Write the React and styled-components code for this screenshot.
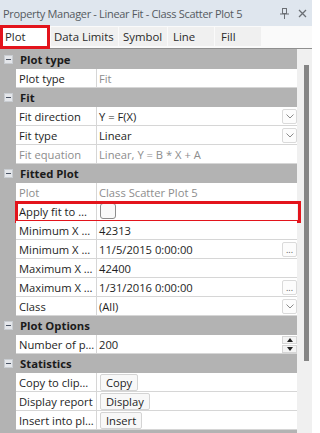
import React from "react";
import styled, { createGlobalStyle, css } from "styled-components";

const GlobalStyle = createGlobalStyle`
  html, body {
    margin: 0;
    padding: 0;
    background: #ffffff;
  }
  body {
    font-family: "Open Sans", "Noto Sans", sans-serif;
  }
`;

// 전체 패널
const Panel = styled.div`
  width: 312px;
  height: 433px;
  overflow: hidden;
  display: flex;
  flex-direction: column;
  background: #f0f0f0;
  font-size: 11.2px;
`;

const TitleBar = styled.div`
  height: 26px;
  flex: none;
  display: flex;
  align-items: center;
  padding: 0 5px 0 3px;
  background: #dfe6ee;
  color: #555a60;
  font-size: 11px;
  letter-spacing: -0.32px;
`;

const TitleText = styled.div`
  flex: 1;
  white-space: nowrap;
  overflow: hidden;
`;

const TitleIcons = styled.div`
  display: flex;
  align-items: center;
  gap: 9px;
  color: #6b6f74;
`;

const TabBar = styled.div`
  height: 23px;
  flex: none;
  display: flex;
  align-items: stretch;
  gap: 1px;
  background: #fafafa;
  padding-top: 1px;
  box-sizing: border-box;
  border-bottom: 1px solid #8f8f8f;
`;

const Tab = styled.div`
  width: ${(p) => p.w}px;
  box-sizing: border-box;
  display: flex;
  align-items: center;
  padding-left: ${(p) => p.pad || 4}px;
  margin-bottom: 2px;
  background: #f0f0f0;
  color: #2a2a2a;
  font-size: 11.4px;
  white-space: nowrap;

  ${(p) =>
    p.active &&
    css`
      background: #ffffff;
      border: 3px solid #e3141c;
      margin: -2px 0 -1px 0;
      padding-left: 2px;
      padding-bottom: 1px;
    `}
`;

const Body = styled.div`
  flex: 1;
  display: flex;
  min-height: 0;
`;

const Grid = styled.div`
  width: 297px;
  flex: none;
  background: #b3b3b3;
  padding-top: 1px;
  display: flex;
  flex-direction: column;
`;

const Scrollbar = styled.div`
  flex: 1;
  background: #f0f0f0;
  padding: 16px 0 0 7px;
`;

const Thumb = styled.div`
  width: 5px;
  height: 296px;
  background: #858585;
`;

const Header = styled.div`
  height: 19px;
  flex: none;
  display: flex;
  align-items: center;
  gap: 7px;
  padding-left: 4px;
  font-weight: 700;
  font-size: 11.3px;
  color: #1b1b1b;
`;

const Toggle = styled.span`
  width: 7px;
  height: 7px;
  flex: none;
  background: #e4e6ea;
  border: 1px solid #c9cdd2;
  display: flex;
  align-items: center;
  justify-content: center;

  &::before {
    content: "";
    width: 5px;
    height: 1px;
    background: #4b5566;
  }
`;

const Row = styled.div`
  height: 19px;
  flex: none;
  margin-left: 16px;
  display: grid;
  grid-template-columns: 80px 1fr;
  column-gap: 1px;
  background: #d6d6d6;
  padding-bottom: 1px;
  box-sizing: border-box;
  position: relative;

  ${(p) =>
    p.highlight &&
    css`
      &::after {
        content: "";
        position: absolute;
        left: -1px;
        right: -4px;
        top: -1px;
        bottom: -2px;
        border: 3px solid #e3141c;
        pointer-events: none;
      }
    `}
`;

const Label = styled.div`
  background: #ffffff;
  padding-left: 3px;
  display: flex;
  align-items: center;
  white-space: nowrap;
  overflow: hidden;
  color: ${(p) => (p.disabled ? "#8d8d8d" : "#1e1e1e")};
`;

const Value = styled.div`
  background: #ffffff;
  padding-left: 2px;
  display: flex;
  align-items: center;
  white-space: nowrap;
  overflow: hidden;
  color: ${(p) => (p.disabled ? "#8d8d8d" : "#1e1e1e")};
`;

const ValueText = styled.span`
  flex: 1;
`;

const EditButton = styled.div`
  width: 15px;
  height: 15px;
  flex: none;
  box-sizing: border-box;
  border: 1px solid #dadada;
  border-radius: 2px;
  background: #fcfcfc;
  display: flex;
  align-items: ${(p) => (p.dots ? "flex-end" : "center")};
  justify-content: center;
  padding-bottom: ${(p) => (p.dots ? 2 : 0)}px;
  color: #555;
  font-size: 9px;
  line-height: 1;
`;

const Spin = styled.div`
  width: 15px;
  height: 17px;
  flex: none;
  display: flex;
  flex-direction: column;
  gap: 1px;
`;

const SpinHalf = styled.div`
  flex: 1;
  box-sizing: border-box;
  border: 1px solid #d6d6d6;
  background: #f4f4f4;
  display: flex;
  align-items: center;
  justify-content: center;

  &::before {
    content: "";
    border-left: 3px solid transparent;
    border-right: 3px solid transparent;
    ${(p) =>
      p.up
        ? "border-bottom: 4px solid #222;"
        : "border-top: 4px solid #222;"}
  }
`;

const CheckBox = styled.div`
  width: 16px;
  height: 16px;
  box-sizing: border-box;
  border: 1px solid #8c8c8c;
  border-radius: 3px;
  background: #f9f9f9;
  margin-left: 1px;
`;

const ActionButton = styled.div`
  height: 17px;
  box-sizing: border-box;
  padding: 0 5px;
  margin-left: 1px;
  border: 1px solid #d4d4d4;
  border-radius: 2px;
  background: #f8f8f8;
  display: flex;
  align-items: center;
  color: #1e1e1e;
`;

const Chevron = () => (
  <svg width="8" height="5" viewBox="0 0 8 5">
    <polyline points="0.5,0.5 4,4 7.5,0.5" fill="none" stroke="#8a8a8a" strokeWidth="1" />
  </svg>
);

const PinIcon = () => (
  <svg width="9" height="11" viewBox="0 0 9 11">
    <rect x="2.5" y="0.5" width="4" height="5" fill="none" stroke="currentColor" />
    <line x1="0" y1="6" x2="9" y2="6" stroke="currentColor" />
    <line x1="4.5" y1="6" x2="4.5" y2="11" stroke="currentColor" />
  </svg>
);

const CloseIcon = () => (
  <svg width="9" height="9" viewBox="0 0 9 9">
    <path d="M1 1 L8 8 M8 1 L1 8" stroke="currentColor" strokeWidth="1.3" />
  </svg>
);

const Dropdown = ({ text }) => (
  <Value>
    <ValueText>{text}</ValueText>
    <EditButton>
      <Chevron />
    </EditButton>
  </Value>
);

const Ellipsis = ({ text }) => (
  <Value>
    <ValueText>{text}</ValueText>
    <EditButton dots>...</EditButton>
  </Value>
);

const App = () => {
  return (
    <>
      <GlobalStyle />
      <Panel>
        <TitleBar>
          <TitleText>Property Manager - Linear Fit - Class Scatter Plot 5</TitleText>
          <TitleIcons>
            <PinIcon />
            <CloseIcon />
          </TitleIcons>
        </TitleBar>

        <TabBar>
          <Tab w={50} active>
            Plot
          </Tab>
          <Tab w={67} pad={3}>Data Limits</Tab>
          <Tab w={48} pad={4}>Symbol</Tab>
          <Tab w={46} pad={5}>Line</Tab>
          <Tab w={46} pad={6}>Fill</Tab>
        </TabBar>

        <Body>
          <Grid>
            <Header>
              <Toggle />
              Plot type
            </Header>
            <Row>
              <Label>Plot type</Label>
              <Value disabled>Fit</Value>
            </Row>

            <Header>
              <Toggle />
              Fit
            </Header>
            <Row>
              <Label>Fit direction</Label>
              <Dropdown text="Y = F(X)" />
            </Row>
            <Row>
              <Label>Fit type</Label>
              <Dropdown text="Linear" />
            </Row>
            <Row>
              <Label disabled>Fit equation</Label>
              <Value disabled>Linear, Y = B * X + A</Value>
            </Row>

            <Header>
              <Toggle />
              Fitted Plot
            </Header>
            <Row>
              <Label disabled>Plot</Label>
              <Value disabled>Class Scatter Plot 5</Value>
            </Row>
            <Row highlight>
              <Label>Apply fit to …</Label>
              <Value>
                <CheckBox />
              </Value>
            </Row>
            <Row>
              <Label>Minimum X …</Label>
              <Value>42313</Value>
            </Row>
            <Row>
              <Label>Minimum X …</Label>
              <Ellipsis text="11/5/2015 0:00:00" />
            </Row>
            <Row>
              <Label>Maximum X …</Label>
              <Value>42400</Value>
            </Row>
            <Row>
              <Label>Maximum X …</Label>
              <Ellipsis text="1/31/2016 0:00:00" />
            </Row>
            <Row>
              <Label>Class</Label>
              <Dropdown text="(All)" />
            </Row>

            <Header>
              <Toggle />
              Plot Options
            </Header>
            <Row>
              <Label>Number of p…</Label>
              <Value>
                <ValueText>200</ValueText>
                <Spin>
                  <SpinHalf up />
                  <SpinHalf />
                </Spin>
              </Value>
            </Row>

            <Header>
              <Toggle />
              Statistics
            </Header>
            <Row>
              <Label>Copy to clip…</Label>
              <Value>
                <ActionButton>Copy</ActionButton>
              </Value>
            </Row>
            <Row>
              <Label>Display report</Label>
              <Value>
                <ActionButton>Display</ActionButton>
              </Value>
            </Row>
            <Row>
              <Label>Insert into pl…</Label>
              <Value>
                <ActionButton>Insert</ActionButton>
              </Value>
            </Row>
          </Grid>
          <Scrollbar>
            <Thumb />
          </Scrollbar>
        </Body>
      </Panel>
    </>
  );
};

export default App;
